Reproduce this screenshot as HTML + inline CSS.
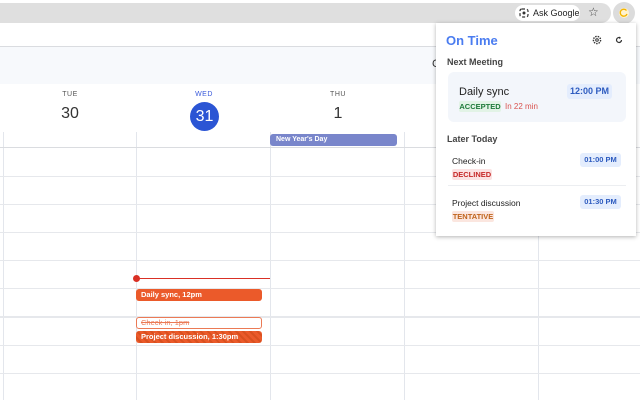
<!DOCTYPE html>
<html><head><meta charset="utf-8"><style>
*{margin:0;padding:0;box-sizing:border-box}
body{width:640px;height:400px;overflow:hidden;background:#fff;font-family:"Liberation Sans",sans-serif;position:relative}
.a{position:absolute}
.vl{position:absolute;top:132px;bottom:0;width:1px;background:#e3e6ec}
.hl{position:absolute;left:0;right:0;height:1px;background:#e6e8ec}
.badge{position:absolute;font-size:7.5px;font-weight:bold;border-radius:2px;text-align:center;line-height:11px}
.tb{position:absolute;background:#e4edfd;color:#2d5bbf;font-weight:bold;border-radius:3px;text-align:center}
</style></head><body>
<div class="a" style="left:0;top:3px;width:611px;height:20px;background:#dfdfdf;border-radius:0 10px 10px 0"></div>
<div class="a" style="left:515px;top:5px;width:65px;height:16px;background:#fff;border-radius:8px;font-size:9px;line-height:16px;padding-left:18px;color:#222">Ask Google</div>
<svg class="a" style="left:519px;top:8px" width="10" height="10" viewBox="0 0 10 10"><rect x="1" y="1" width="8" height="8" rx="2" fill="none" stroke="#333" stroke-width="1.2" stroke-dasharray="3 2"/><circle cx="5" cy="5" r="1.5" fill="#333"/></svg>
<div class="a" style="left:588px;top:5px;font-size:12px;color:#444">☆</div>
<div class="a" style="left:613px;top:2px;width:22px;height:22px;border-radius:50%;background:#dcdcdc"></div>
<svg class="a" style="left:618px;top:7px" width="12" height="12" viewBox="0 0 12 12"><circle cx="6" cy="6" r="5" fill="#fff3d0"/><path d="M8.5 3.5A3.5 3.5 0 1 0 9 7" fill="none" stroke="#f4b400" stroke-width="1.4"/></svg>
<div class="a" style="left:0;top:46px;width:640px;height:1px;background:#dadce0"></div>
<div class="a" style="left:0;top:47px;width:640px;height:37px;background:#f7f9fc"></div>
<div class="a" style="left:432px;top:58px;font-size:11px;color:#333">C</div>
<div class="a" style="left:50px;top:91px;width:40px;text-align:center;font-size:7px;color:#555;letter-spacing:.5px">TUE</div>
<div class="a" style="left:50px;top:105px;width:40px;text-align:center;font-size:16px;color:#333">30</div>
<div class="a" style="left:184px;top:91px;width:40px;text-align:center;font-size:7px;color:#3b5bdb;letter-spacing:.5px">WED</div>
<div class="a" style="left:190px;top:102px;width:29px;height:29px;border-radius:50%;background:#2b55d4;color:#fff;font-size:16px;text-align:center;line-height:29px">31</div>
<div class="a" style="left:318px;top:91px;width:40px;text-align:center;font-size:7px;color:#555;letter-spacing:.5px">THU</div>
<div class="a" style="left:318px;top:105px;width:40px;text-align:center;font-size:16px;color:#333">1</div>
<div class="vl" style="left:3px"></div><div class="vl" style="left:136px"></div><div class="vl" style="left:270px"></div><div class="vl" style="left:404px"></div><div class="vl" style="left:538px"></div>
<div class="hl" style="top:147px;background:#dadce0"></div>
<div class="hl" style="top:176px"></div><div class="hl" style="top:204px"></div><div class="hl" style="top:232px"></div><div class="hl" style="top:260px"></div><div class="hl" style="top:288px"></div><div class="hl" style="top:316px;height:2px"></div><div class="hl" style="top:345px"></div><div class="hl" style="top:373px"></div>
<div class="a" style="left:270px;top:134px;width:127px;height:12px;background:#7986cb;border-radius:3px;color:#fff;font-size:7px;font-weight:bold;line-height:12px;padding-left:6px">New Year's Day</div>
<div class="a" style="left:136px;top:278px;width:134px;height:1px;background:#d93025"></div>
<div class="a" style="left:133px;top:275px;width:7px;height:7px;border-radius:50%;background:#d93025"></div>
<div class="a" style="left:136px;top:289px;width:126px;height:12px;background:#eb5a2a;border-radius:3px;color:#fff;font-size:7.5px;font-weight:bold;line-height:12px;padding-left:5px">Daily sync, 12pm</div>
<div class="a" style="left:136px;top:317px;width:126px;height:12px;background:#fff;border:1px solid #eb7a55;border-radius:3px;color:#eb7a55;font-size:7.5px;line-height:10px;padding-left:4px;text-decoration:line-through">Check-in, 1pm</div>
<div class="a" style="left:136px;top:331px;width:126px;height:12px;background:repeating-linear-gradient(45deg,#eb5a2a 0 3px,#d9501f 3px 5px);border-radius:3px;color:#fff;font-size:7.5px;font-weight:bold;line-height:12px;padding-left:5px">Project discussion, 1:30pm</div>
<div class="a" style="left:436px;top:23px;width:200px;height:213px;background:#fff;box-shadow:0 1px 4px rgba(0,0,0,.3)"></div>
<div class="a" style="left:446px;top:33px;font-size:13px;font-weight:bold;color:#4a7cf0">On Time</div>
<svg class="a" style="left:592px;top:35px" width="10" height="10" viewBox="0 0 10 10"><circle cx="5" cy="5" r="3.6" fill="none" stroke="#333" stroke-width="1.4" stroke-dasharray="1.5 1"/><circle cx="5" cy="5" r="1.3" fill="none" stroke="#333"/></svg>
<svg class="a" style="left:615px;top:36px" width="8" height="8" viewBox="0 0 8 8"><path d="M6.5 4A2.5 2.5 0 1 1 5 1.7" fill="none" stroke="#333" stroke-width="1.2"/><path d="M4 0.5L6 1.8L4.5 3.3z" fill="#333"/></svg>
<div class="a" style="left:447px;top:57px;font-size:9px;font-weight:bold;color:#444">Next Meeting</div>
<div class="a" style="left:448px;top:72px;width:178px;height:50px;background:#f3f6fb;border-radius:6px"></div>
<div class="a" style="left:459px;top:86px;font-size:11px;color:#222">Daily sync</div>
<div class="tb" style="left:567px;top:84px;width:45px;height:15px;font-size:9px;line-height:15px">12:00 PM</div>
<div class="badge" style="left:459px;top:101px;width:42px;background:#e2f3e6;color:#1e7a3a">ACCEPTED</div>
<div class="a" style="left:505px;top:102px;font-size:8px;color:#d9534f">In 22 min</div>
<div class="a" style="left:447px;top:134px;font-size:9px;font-weight:bold;color:#444">Later Today</div>
<div class="a" style="left:452px;top:156px;font-size:8.5px;color:#222">Check-in</div>
<div class="tb" style="left:580px;top:153px;width:41px;height:14px;font-size:7.5px;line-height:14px">01:00 PM</div>
<div class="badge" style="left:452px;top:169px;width:40px;background:#fbe3e3;color:#c62828">DECLINED</div>
<div class="a" style="left:448px;top:185px;width:178px;height:1px;background:#eceef1"></div>
<div class="a" style="left:452px;top:198px;font-size:8.5px;color:#222">Project discussion</div>
<div class="tb" style="left:580px;top:195px;width:41px;height:14px;font-size:7.5px;line-height:14px">01:30 PM</div>
<div class="badge" style="left:452px;top:211px;width:42px;background:#fbe6df;color:#c0641c">TENTATIVE</div>
</body></html>
